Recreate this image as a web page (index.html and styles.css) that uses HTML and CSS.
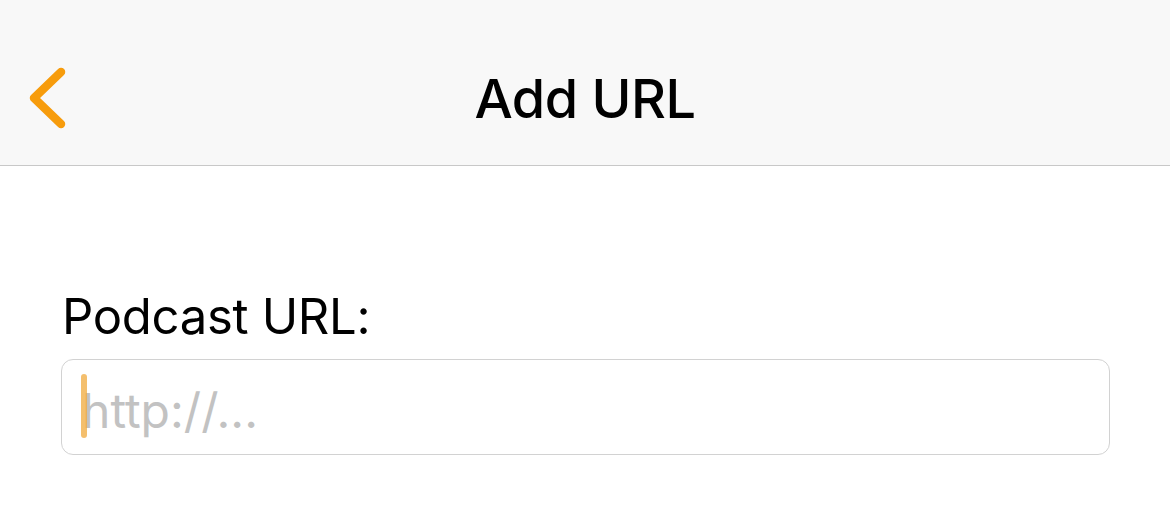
FILE: index.html
```html
<!DOCTYPE html>
<html lang="en">
<head>
  <meta charset="UTF-8">
  <meta name="viewport" content="width=device-width, initial-scale=1.0">
  <title>Add URL</title>
  <link rel="stylesheet" href="styles.css">
</head>
<body>
  <header class="navbar">
    <button class="back" type="button" aria-label="Back">
      <svg width="48" height="72" viewBox="0 0 48 72">
        <path d="M35 6 L8 32 L35 58" fill="none" stroke="#f79c0c" stroke-width="8.5" stroke-linecap="round" stroke-linejoin="round"/>
      </svg>
    </button>
    <h1>Add URL</h1>
  </header>

  <main class="content">
    <label class="label" for="podcastUrl">Podcast URL:</label>
    <div class="field">
      <span class="caret"></span>
      <input type="text" id="podcastUrl" placeholder="http://...">
    </div>
  </main>
</body>
</html>
```

FILE: styles.css
```css
body {
  margin: 0;
  font-family: Inter, "Noto Sans", sans-serif;
  background: #fff;
  color: #000;
}

.navbar {
  position: relative;
  height: 166px;
  background: #f8f8f8;
  border-bottom: 1px solid #c8c8c8;
  box-sizing: border-box;
  display: flex;
  align-items: center;
  justify-content: center;
}

.navbar h1 {
  margin: 0;
  font-size: 54px;
  font-weight: 500;
  letter-spacing: -0.5px;
  padding-top: 32px;
}

.back {
  position: absolute;
  left: 26px;
  top: 66px;
  background: none;
  border: none;
  padding: 0;
  display: flex;
}

.content {
  padding: 121px 60px 0 61px;
}

.label {
  display: block;
  font-size: 49px;
  font-weight: 400;
  letter-spacing: -0.3px;
  margin-bottom: 13px;
  padding-left: 1px;
}

.field {
  position: relative;
  height: 96px;
  border: 1.5px solid #d2d2d2;
  border-radius: 12px;
  box-sizing: border-box;
  display: flex;
  align-items: center;
}

.field input {
  flex: 1;
  border: none;
  outline: none;
  background: transparent;
  font-family: inherit;
  font-size: 48px;
  padding: 6px 0 0 20px;
  height: 100%;
  box-sizing: border-box;
}

.field input::placeholder {
  color: #c2c2c2;
}

.caret {
  position: absolute;
  left: 19px;
  top: 14px;
  width: 6px;
  height: 64px;
  border-radius: 3px;
  background: rgba(240, 170, 60, 0.75);
}
```
